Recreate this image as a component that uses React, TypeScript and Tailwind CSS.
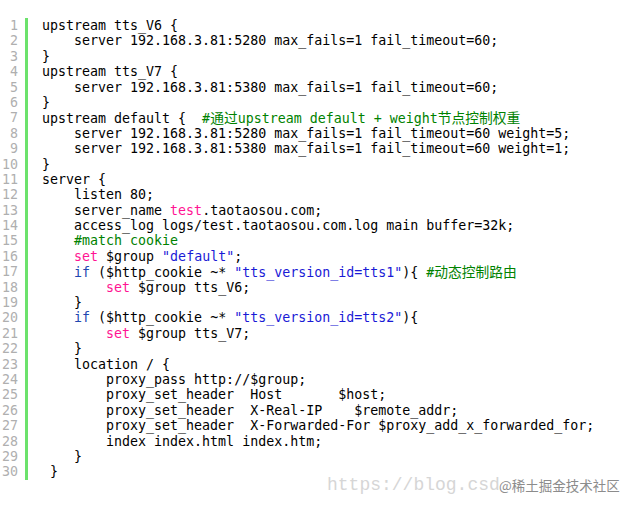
import React from "react";

type Seg = [string, string];

const P = "text-black";
const C = "text-[#008200]";
const K = "text-[#ff1493]";
const S = "text-[#1a1ad6]";
const I = "text-[#2047b0]";

const lines: Seg[][] = [
  [[P, "upstream tts_V6 {"]],
  [[P, "    server 192.168.3.81:5280 max_fails=1 fail_timeout=60;"]],
  [[P, "}"]],
  [[P, "upstream tts_V7 {"]],
  [[P, "    server 192.168.3.81:5380 max_fails=1 fail_timeout=60;"]],
  [[P, "}"]],
  [
    [P, "upstream default {  "],
    [C, "#"],
    [C + " cjk", "通过"],
    [C, "upstream default + weight"],
    [C + " cjk", "节点控制权重"],
  ],
  [[P, "    server 192.168.3.81:5280 max_fails=1 fail_timeout=60 weight=5;"]],
  [[P, "    server 192.168.3.81:5380 max_fails=1 fail_timeout=60 weight=1;"]],
  [[P, "}"]],
  [[P, "server {"]],
  [[P, "    listen 80;"]],
  [
    [P, "    server_name "],
    [K, "test"],
    [P, ".taotaosou.com;"],
  ],
  [[P, "    access_log logs/test.taotaosou.com.log main buffer=32k;"]],
  [[C, "    #match cookie"]],
  [
    [P, "    "],
    [K, "set"],
    [P, " $group "],
    [S, '"default"'],
    [P, ";"],
  ],
  [
    [P, "    "],
    [I, "if"],
    [P, " ($http_cookie ~* "],
    [S, '"tts_version_id=tts1"'],
    [P, "){ "],
    [C, "#"],
    [C + " cjk", "动态控制路由"],
  ],
  [
    [P, "        "],
    [K, "set"],
    [P, " $group tts_V6;"],
  ],
  [[P, "    }"]],
  [
    [P, "    "],
    [I, "if"],
    [P, " ($http_cookie ~* "],
    [S, '"tts_version_id=tts2"'],
    [P, "){"],
  ],
  [
    [P, "        "],
    [K, "set"],
    [P, " $group tts_V7;"],
  ],
  [[P, "    }"]],
  [[P, "    location / {"]],
  [[P, "        proxy_pass http://$group;"]],
  [[P, "        proxy_set_header  Host       $host;"]],
  [[P, "        proxy_set_header  X-Real-IP    $remote_addr;"]],
  [[P, "        proxy_set_header  X-Forwarded-For $proxy_add_x_forwarded_for;"]],
  [[P, "        index index.html index.htm;"]],
  [[P, "    }"]],
  [[P, " }"]],
];

export default function App() {
  return (
    <div className="relative w-[627px] h-[505px] bg-white overflow-hidden font-['DejaVu_Sans_Mono','Noto_Sans_CJK_SC',monospace] text-[13.3px] leading-[15.4px]">
      <div className="flex pt-[18px]">
        {/* line numbers */}
        <div className="w-[18px] text-right text-[#afafaf]">
          {lines.map((_, i) => (
            <div key={i} className="h-[15.4px]">
              {i + 1}
            </div>
          ))}
        </div>

        {/* code */}
        <div className="ml-[7px] border-l-[3px] border-[#6ce26c] pl-[14px]">
          {lines.map((segs, i) => (
            <div key={i} className="h-[15.4px] whitespace-pre">
              {segs.map(([cls, text], j) => (
                <span
                  key={j}
                  className={
                    cls.includes("cjk")
                      ? cls.replace(" cjk", "") + " text-[13.75px] font-['Noto_Sans_CJK_SC',sans-serif]"
                      : cls
                  }
                >
                  {text}
                </span>
              ))}
            </div>
          ))}
        </div>
      </div>

      {/* watermark */}
      <div className="absolute left-[327px] top-[474px] whitespace-pre font-['Liberation_Mono',monospace] text-[18px] leading-[22px] text-[#d6d6d6]">
        https://blog.csd
      </div>
      <div className="absolute left-[499px] top-[476px] whitespace-pre font-['Noto_Sans_CJK_SC',sans-serif] text-[13.5px] leading-[18px] text-[#8c8c8c] [text-shadow:0_0_2px_#fff,0_0_2px_#fff]">
        @稀土掘金技术社区
      </div>
    </div>
  );
}
